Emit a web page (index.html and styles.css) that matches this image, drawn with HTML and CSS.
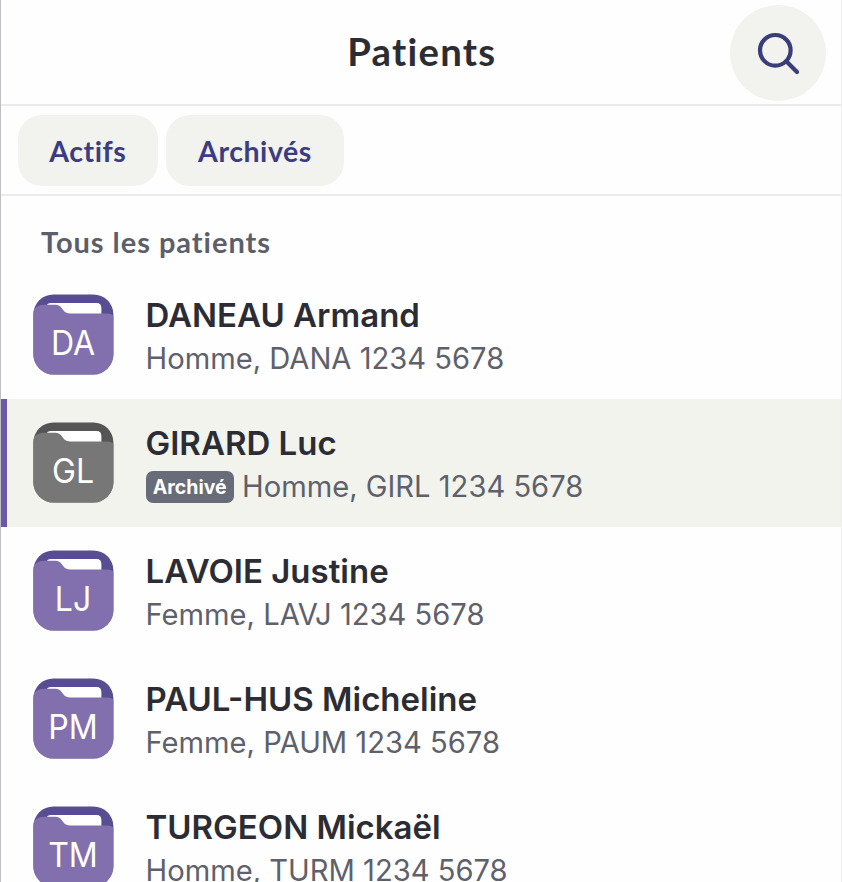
FILE: index.html
```html
<!DOCTYPE html>
<html lang="fr">
<head>
<meta charset="utf-8">
<title>Patients</title>
<link rel="stylesheet" href="styles.css">
</head>
<body>
<svg class="defs" width="0" height="0" aria-hidden="true">
  <symbol id="folder" viewBox="0 0 81 81">
    <g transform="translate(.4 .4)">
      <rect class="folder-back" width="80" height="80" rx="20"/>
      <path class="folder-paper" d="M13 11Q14 8.5 17 8.5H63Q68 8.5 68 13.5V24H13Z"/>
      <path class="folder-front" d="M0 17Q2 11 9 10.3H22Q26 10.3 29 14.5L31 17.2Q33 19.2 37 19.2H74Q79 19.5 80 22V60A20 20 0 0 1 60 80H20A20 20 0 0 1 0 60Z"/>
    </g>
  </symbol>
</svg>
<main class="panel">
  <header class="header">
    <h1 class="title">Patients</h1>
    <button class="search" aria-label="Rechercher">
      <svg width="48" height="48" viewBox="0 0 48 48" fill="none" stroke="currentColor" stroke-width="4.2" stroke-linecap="round"><circle cx="21.3" cy="21.3" r="15.3"/><path d="M32.3 32.3L43 43"/></svg>
    </button>
  </header>
  <nav class="filters">
    <button class="chip">Actifs</button>
    <button class="chip chip-wide">Archivés</button>
  </nav>
  <h2 class="section">Tous les patients</h2>
  <ul class="list">
    <li class="row">
      <div class="avatar"><svg class="folder" width="81" height="81"><use href="#folder"/></svg><span class="initials">DA</span></div>
      <div class="info"><div class="name">DANEAU Armand</div><div class="meta"><span>Homme, DANA 1234 5678</span></div></div>
    </li>
    <li class="row selected">
      <div class="avatar archived"><svg class="folder" width="81" height="81"><use href="#folder"/></svg><span class="initials">GL</span></div>
      <div class="info"><div class="name">GIRARD Luc</div><div class="meta"><span class="badge">Archivé</span><span>Homme, GIRL 1234 5678</span></div></div>
    </li>
    <li class="row">
      <div class="avatar"><svg class="folder" width="81" height="81"><use href="#folder"/></svg><span class="initials">LJ</span></div>
      <div class="info"><div class="name">LAVOIE Justine</div><div class="meta"><span>Femme, LAVJ 1234 5678</span></div></div>
    </li>
    <li class="row">
      <div class="avatar"><svg class="folder" width="81" height="81"><use href="#folder"/></svg><span class="initials">PM</span></div>
      <div class="info"><div class="name">PAUL-HUS Micheline</div><div class="meta"><span>Femme, PAUM 1234 5678</span></div></div>
    </li>
    <li class="row">
      <div class="avatar"><svg class="folder" width="81" height="81"><use href="#folder"/></svg><span class="initials">TM</span></div>
      <div class="info"><div class="name">TURGEON Mickaël</div><div class="meta"><span>Homme, TURM 1234 5678</span></div></div>
    </li>
  </ul>
</main>
</body>
</html>
```
FILE: styles.css
```css
* { box-sizing: border-box; }
body { margin: 0; background: #fefefe; font-family: Inter, sans-serif; }
h1, h2, ul { margin: 0; padding: 0; }
button { border: 0; padding: 0; font: inherit; }
.defs { display: block; }
.panel { height: 882px; overflow: hidden; border-left: 1px solid #bebdc4; border-right: 1px solid #ededee; }
.header { height: 106px; display: grid; grid-template-columns: 1fr auto 1fr; align-items: center; border-bottom: 2px solid #ececec; padding: 1px 15.5px 0 0; }
.title { grid-column: 2; margin: -3px 0 0 17px; font: 700 38.3px/40px Lato, sans-serif; letter-spacing: 1.25px; color: #2c2d34; }
.search { justify-self: end; display: flex; align-items: center; justify-content: center; width: 96px; height: 96px; border-radius: 50%; background: #f2f3ee; color: #393d79; }
.filters { height: 90px; display: flex; gap: 8px; align-items: center; padding: 1px 0 0 16.5px; border-bottom: 2px solid #ececec; }
.chip { display: flex; align-items: center; justify-content: center; width: 140.5px; height: 71.5px; border-radius: 24px; background: #f2f3ee; font: 700 28.5px/36px Lato, sans-serif; letter-spacing: .55px; color: #3b3c82; }
.chip-wide { width: 178px; }
.section { padding: 28px 0 0 40px; height: 74px; font: 700 29px/36px Lato, sans-serif; letter-spacing: .97px; color: #5c5f69; }
.list { list-style: none; margin-top: .6px; }
.row { height: 128px; display: flex; align-items: center; padding-left: 32px; }
.selected { background: #f2f3ed; padding-left: 26px; border-left: 6px solid #6b58a6; }
.avatar { position: relative; width: 80px; height: 80px; margin-right: 32.5px; --back: #594d91; --front: #8170ad; }
.archived { --back: #555; --front: #777; }
.folder { display: block; margin-top: -.6px; }
.folder-back { fill: var(--back); }
.folder-paper { fill: #fff; }
.folder-front { fill: var(--front); }
.initials { position: absolute; left: 0; right: 0; top: 27.4px; text-align: center; font-size: 34.5px; line-height: 42px; color: #fff; transform: scaleX(.93); }
.info { height: 80px; }
.name { height: 42px; font-size: 33px; line-height: 41px; font-weight: 600; color: #2c2d34; white-space: nowrap; }
.meta { display: flex; align-items: center; gap: 8px; height: 44px; font-size: 29.15px; line-height: 44px; color: #5e616b; white-space: nowrap; }
.badge { width: 88.5px; height: 32px; border-radius: 7px; background: #686c78; color: #fff; font-size: 19.5px; line-height: 33px; font-weight: 700; text-align: center; }
```
